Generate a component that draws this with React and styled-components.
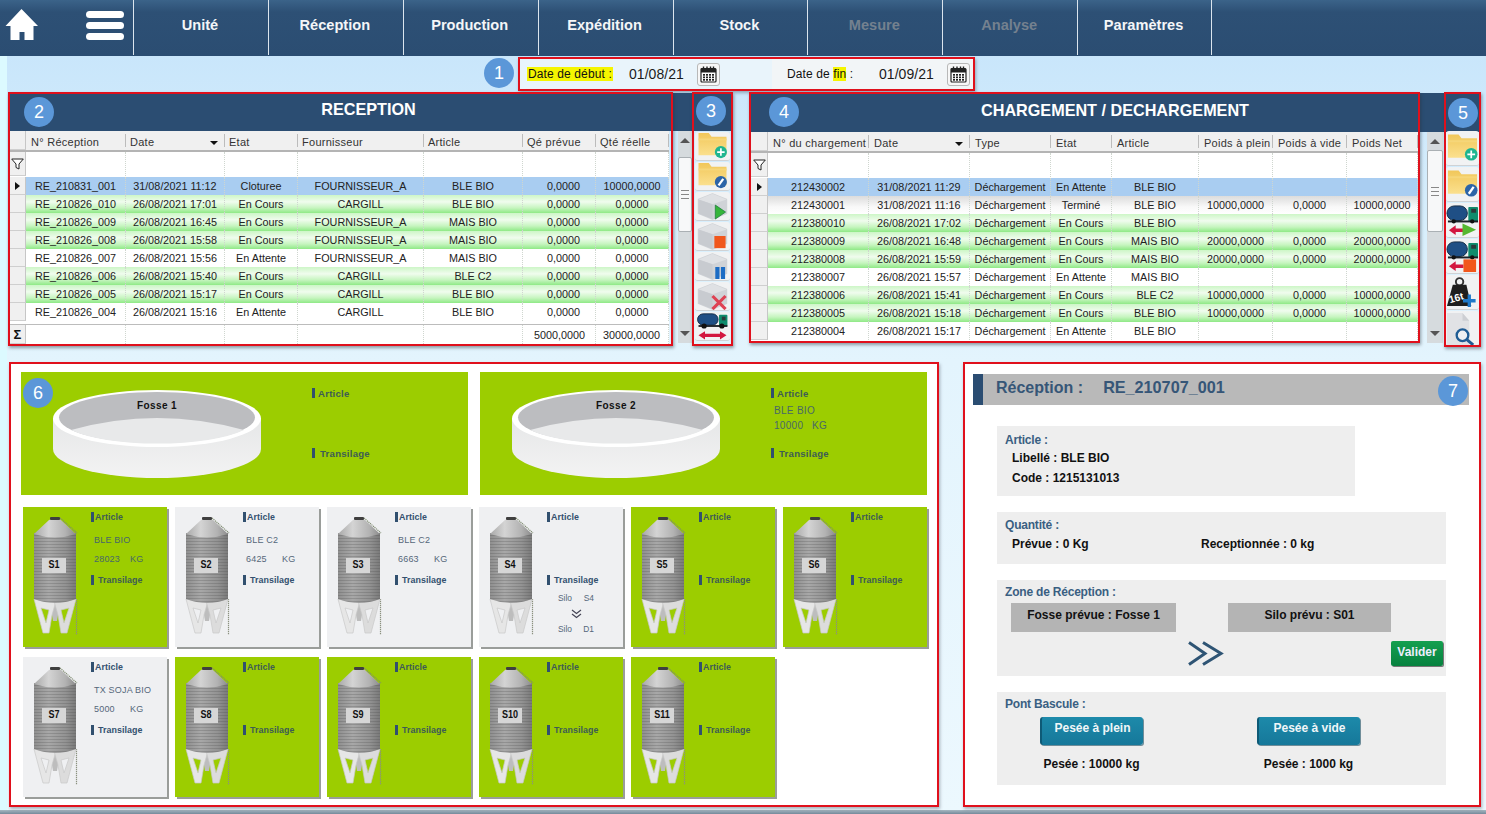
import React from "react";
import styled, { createGlobalStyle } from "styled-components";

const GlobalStyle = createGlobalStyle`
  html, body { margin: 0; padding: 0; background: #e4f4fd; }
  * { box-sizing: border-box; }
  body { font-family: "Liberation Sans", Arial, sans-serif; color: #111; }
`;

const NAVY = "#2b4d72";
const RED = "#e0101c";

const Page = styled.div`
  width: 1486px;
  height: 814px;
  overflow: hidden;
  display: flex;
  flex-direction: column;
  background:
    linear-gradient(90deg, #dcfaff 0, #dcfaff 7px, transparent 7px),
    linear-gradient(180deg, #c9e6fb 56px, #d9effc 240px, #e3f4fd 360px, #ecf8fe 814px);
`;

/* ---------- Top navigation ---------- */
const TopBar = styled.header`
  height: 56px;
  flex: none;
  display: flex;
  background: linear-gradient(180deg, #3b6389 0, #2d5075 12px, ${NAVY} 100%);
`;
const HomeZone = styled.div`
  width: 133px;
  flex: none;
  display: flex;
  align-items: flex-start;
  justify-content: space-between;
  padding: 8px 9px 0 5px;
`;
const NavItem = styled.div`
  width: 134.875px;
  flex: none;
  border-left: 1px solid #dbe5ee;
  margin-bottom: 1px;
  padding: 16px 2px 0 0;
  text-align: center;
  font-size: 14.6px;
  line-height: 18px;
  font-weight: 700;
  color: ${(p) => (p.$off ? "#74818f" : "#f4f6f8")};
  &:last-child { border-right: 1px solid #dbe5ee; }
`;
const MenuSvg = styled.svg`
  margin-top: 3px;
`;

/* ---------- Annotation overlays ---------- */
const Badge = styled.div`
  position: absolute;
  left: ${(p) => p.$x}px;
  top: ${(p) => p.$y}px;
  z-index: 5;
  width: 30px;
  height: 30px;
  border-radius: 50%;
  background: #5b97d8;
  color: #fff;
  font-size: 18px;
  line-height: 30px;
  text-align: center;
`;
const Frame = styled.div`
  position: absolute;
  left: ${(p) => p.$x}px;
  top: ${(p) => p.$y}px;
  width: ${(p) => p.$w}px;
  height: ${(p) => p.$h}px;
  z-index: 4;
  border: 2px solid ${RED};
  box-shadow: 1px 2px 3px rgba(40, 50, 60, 0.45);
  pointer-events: none;
`;

/* ---------- Date bar ---------- */
const DateRow = styled.div`
  position: relative;
  height: 37px;
  flex: none;
  padding: 1px 0 0 518px;
`;
const DateBar = styled.div`
  width: 457px;
  height: 34px;
  display: flex;
  border: 2px solid ${RED};
  box-shadow: 1px 2px 3px rgba(40, 50, 60, 0.35);
  background: #e9f4fb;
`;
const DateGroup = styled.div`
  flex: ${(p) => (p.$last ? "1" : "none")};
  width: ${(p) => (p.$last ? "auto" : "252px")};
  display: flex;
  align-items: center;
  padding-left: ${(p) => (p.$last ? "15px" : "7px")};
  background: ${(p) => (p.$last ? "#f2f5f7" : "transparent")};
`;
const DateLabel = styled.div`
  width: ${(p) => p.$w}px;
  flex: none;
  font-size: 12px;
  line-height: 15px;
  letter-spacing: 0.12px;
  white-space: nowrap;
`;
const Mark = styled.mark`
  background: #f5f500;
  color: #111;
  padding: 0 ${(p) => p.$pad || 0}px;
`;
const DateValue = styled.div`
  width: 68px;
  flex: none;
  font-size: 14px;
  letter-spacing: 0.05px;
  color: #1a1a1a;
`;
const CalButton = styled.div`
  width: 23px;
  height: 23px;
  flex: none;
  display: flex;
  align-items: center;
  justify-content: center;
  background: #f7f7f7;
  border: 1px solid #b8b8b8;
  border-radius: 3px;
`;

/* ---------- Upper grids ---------- */
const UpperRow = styled.section`
  height: 253px;
  flex: none;
  display: flex;
  padding-left: 10px;
  gap: 18px;
`;
const GridGroup = styled.div`
  position: relative;
  width: ${(p) => p.$w}px;
  flex: none;
  display: flex;
  flex-direction: column;
`;
const Strip = styled.div`
  height: ${(p) => p.$h}px;
  flex: none;
  background: ${NAVY};
  color: #fff;
  font-size: 16.2px;
  font-weight: 700;
  line-height: ${(p) => p.$lh}px;
  padding-right: ${(p) => p.$pr || 0}px;
  text-align: center;
`;
const GridBody = styled.div`
  display: flex;
  align-items: flex-start;
`;
const Table = styled.div`
  width: ${(p) => p.$w}px;
  height: ${(p) => p.$h}px;
  flex: none;
  display: flex;
  flex-direction: column;
  background: #fff;
  font-size: 10.8px;
  color: #222;
`;
const GridRow = styled.div`
  display: grid;
  grid-template-columns: ${(p) => p.$cols};
  height: ${(p) => p.$h || 18}px;
  flex: none;
  background: ${(p) =>
    p.$tone === "sel"
      ? "#a9cdf1"
      : p.$tone === "green"
      ? "linear-gradient(180deg,#cdf6c7 0,#f0fcee 38%,#c6f5bf 72%,#8fe986 100%)"
      : p.$tone === "grey"
      ? "linear-gradient(180deg,#dcdcdc 0,#f8f8f8 60%,#fff 100%)"
      : p.$tone === "head"
      ? "#f0f0f0"
      : "#fff"};
  border-bottom: ${(p) => (p.$tone === "head" ? "2px solid #b4b4b4" : "none")};
  margin-bottom: ${(p) => p.$mb || 0}px;
  margin-top: ${(p) => (p.$foot ? "auto" : "0")};
  border-top: ${(p) => (p.$foot ? "1px solid #bcbcbc" : "none")};
`;
const RowHead = styled.div`
  background: #f0f0f0;
  border-right: 1px solid #c6c6c6;
  border-bottom: 1px solid #cfcfcf;
  display: flex;
  align-items: center;
  justify-content: center;
  font-size: 13px;
  font-weight: 700;
  color: #111;
`;
const Arrow = styled.span`
  width: 0;
  height: 0;
  border-top: 4px solid transparent;
  border-bottom: 4px solid transparent;
  border-left: 5px solid #111;
`;
const HeadCell = styled.div`
  position: relative;
  display: flex;
  align-items: center;
  padding: 2px 0 0 ${(p) => p.$pad}px;
  font-size: 11px;
  letter-spacing: 0.27px;
  color: #333;
  white-space: nowrap;
  &::after {
    content: "";
    position: absolute;
    right: 0;
    top: 3px;
    bottom: 3px;
    width: 1px;
    background: #bcbcbc;
  }
`;
const SortMark = styled.span`
  position: absolute;
  right: 7px;
  top: 10px;
  width: 0;
  height: 0;
  border-left: 4px solid transparent;
  border-right: 4px solid transparent;
  border-top: 4px solid #111;
`;
const Cell = styled.div`
  display: flex;
  align-items: center;
  justify-content: ${(p) => (p.$right ? "flex-end" : "center")};
  padding-left: ${(p) => p.$pad || 0}px;
  padding-right: ${(p) => p.$right || 0}px;
  border-right: 1px dotted #cfd6cf;
  white-space: nowrap;
`;

const ScrollTrack = styled.div`
  position: relative;
  width: ${(p) => p.$w}px;
  height: ${(p) => p.$h}px;
  flex: none;
  margin-left: 9px;
  background: #d6dbde;
  display: flex;
  flex-direction: column;
  align-items: center;
  justify-content: space-between;
  padding: 7px 0;
`;
const ScrollUp = styled.span`
  width: 0;
  height: 0;
  border-left: 5px solid transparent;
  border-right: 5px solid transparent;
  border-bottom: 5px solid #555;
`;
const ScrollDown = styled.span`
  width: 0;
  height: 0;
  border-left: 5px solid transparent;
  border-right: 5px solid transparent;
  border-top: 5px solid #555;
`;
const ScrollThumb = styled.span`
  position: absolute;
  left: 0;
  right: 0;
  top: ${(p) => p.$top}px;
  height: ${(p) => p.$h}px;
  background: #f7f8f9;
  border: 1px solid #aab0b4;
  border-radius: 2px;
  display: flex;
  align-items: center;
  justify-content: center;
  &::after {
    content: "";
    width: 8px;
    height: 7px;
    border-top: 1px solid #888;
    border-bottom: 1px solid #888;
    background: linear-gradient(#888, #888) center / 100% 1px no-repeat;
  }
`;
const TileColumn = styled.div`
  width: ${(p) => p.$w}px;
  flex: none;
  margin-left: 3px;
  margin-top: ${(p) => p.$mt}px;
  display: flex;
  flex-direction: column;
  gap: 1px;
`;
const Tile = styled.div`
  height: ${(p) => p.$h}px;
  flex: none;
  background: #f1f2f3;
  border-bottom: 1px solid #cfd2d5;
  border-radius: 3px;
  display: flex;
  align-items: center;
  justify-content: center;
  overflow: hidden;
  & > svg { width: 100%; height: 100%; display: block; }
`;

/* ---------- Silo panel ---------- */
const LowerRow = styled.div`
  height: 445px;
  flex: none;
  margin-top: 16px;
  display: flex;
  padding-left: 9px;
  gap: 24px;
`;
const SiloPanel = styled.section`
  position: relative;
  width: 930px;
  flex: none;
  background: #fff;
  border: 2px solid ${RED};
  box-shadow: 1px 2px 3px rgba(40, 50, 60, 0.35);
  padding: 8px 0 0 10px;
`;
const FosseRow = styled.div`
  display: flex;
  gap: 12px;
`;
const FosseCard = styled.div`
  width: 447px;
  height: 123px;
  background: #9ccd00;
  display: flex;
  padding: 17px 0 0 31px;
`;
const FossePic = styled.div`
  position: relative;
  width: 210px;
  height: 92px;
  flex: none;
  & > svg { display: block; }
`;
const FosseName = styled.div`
  position: absolute;
  left: 0;
  right: 0;
  top: 11px;
  text-align: center;
  font-size: 10px;
  font-weight: 700;
  letter-spacing: 0.4px;
  color: #111;
`;
const FosseInfo = styled.div`
  margin: -2px 0 0 50px;
`;
const SiloGrid = styled.div`
  display: grid;
  grid-template-columns: repeat(6, 144px);
  grid-auto-rows: 140px;
  gap: 10px 8px;
  margin: 12px 0 0 2px;
`;
const SiloCard = styled.div`
  display: flex;
  background: ${(p) => (p.$on ? "#9ccd00" : "#eff0f2")};
  box-shadow: 2px 2px 0 #9a9d9a;
  padding: 8px 0 0 9px;
`;
const SiloPic = styled.div`
  position: relative;
  width: 46px;
  height: 122px;
  flex: none;
  & > svg { display: block; }
`;
const SiloTag = styled.div`
  position: absolute;
  left: 10px;
  top: 43px;
  width: 24px;
  height: 15px;
  background: #d6d6d6;
`;
const SiloTagText = styled.div`
  font-size: 11px;
  font-weight: 700;
  line-height: 13px;
  text-align: center;
  color: #111;
  transform: scaleX(0.82);
`;
const SiloInfo = styled.div`
  margin: -4px 0 0 13px;
  min-width: 0;
  flex: 1;
`;
const Caption = styled.div`
  display: flex;
  align-items: center;
  height: 12px;
  font-size: ${(p) => (p.$big ? 9.6 : 8.9)}px;
  letter-spacing: ${(p) => (p.$big ? 0.25 : 0.05)}px;
  font-weight: 700;
  color: ${(p) => (p.$on ? "#3d5c55" : "#33506f")};
  white-space: nowrap;
  &::before {
    content: "";
    width: 3px;
    height: 10px;
    background: #31506f;
    margin-right: ${(p) => p.$gap}px;
    flex: none;
  }
`;
const DataBlock = styled.div`
  height: ${(p) => p.$h}px;
  padding: ${(p) => p.$pt}px 0 0 3px;
`;
const DataLine = styled.div`
  display: flex;
  height: ${(p) => p.$h}px;
  align-items: center;
  font-size: ${(p) => (p.$big ? 10 : 9)}px;
  letter-spacing: ${(p) => (p.$big ? 0.3 : 0.2)}px;
  color: ${(p) => (p.$on ? "#48686a" : "#55677a")};
  white-space: nowrap;
`;
const DataValue = styled.span`
  width: ${(p) => (p.$big ? 38 : 36)}px;
  flex: none;
`;
const TransferBlock = styled.div`
  margin: 6px 0 0 11px;
  width: 36px;
  display: flex;
  flex-direction: column;
  align-items: center;
  font-size: 8.4px;
  color: #55677a;
  white-space: nowrap;
`;
const TransferLine = styled.div`
  display: flex;
  justify-content: space-between;
  width: 100%;
  height: 12px;
  line-height: 12px;
`;
const ChevronSlot = styled.div`
  height: 10px;
  margin: 5px 0 4px;
  & > svg { display: block; }
`;

/* ---------- Reception detail ---------- */
const DetailPanel = styled.section`
  position: relative;
  width: 518px;
  flex: none;
  background: #fff;
  border: 2px solid ${RED};
  box-shadow: 1px 2px 3px rgba(40, 50, 60, 0.35);
  padding: 10px 10px 0 8px;
`;
const DetailTitle = styled.h2`
  margin: 0;
  height: 31px;
  display: flex;
  gap: 20px;
  background: #b9b9b9;
  border-left: 10px solid ${NAVY};
  padding-left: 13px;
  font-size: 16px;
  line-height: 27px;
  font-weight: 700;
  color: #365677;
`;
const TitleCode = styled.span`
  font-size: 16.2px;
`;
const Sections = styled.div`
  padding: 21px 20px 0 24px;
  display: flex;
  flex-direction: column;
  gap: 16px;
`;
const Block = styled.div`
  width: ${(p) => p.$w || 449}px;
  height: ${(p) => p.$h}px;
  flex: none;
  background: #eeeeee;
  padding: ${(p) => p.$pt}px 0 0 8px;
`;
const BlockLabel = styled.div`
  font-size: 12px;
  line-height: 14px;
  color: #3a5f82;
  font-weight: 700;
  letter-spacing: -0.2px;
`;
const InfoList = styled.div`
  margin-top: 1px;
`;
const InfoLine = styled.div`
  font-size: 12px;
  line-height: 20px;
  font-weight: 700;
  padding-left: 7px;
  color: #111;
`;
const QtyRow = styled.div`
  display: grid;
  grid-template-columns: 189px 1fr;
  padding-left: 7px;
  margin-top: 2px;
  font-size: 12px;
  line-height: 20px;
  font-weight: 700;
  color: #111;
`;
const ZoneRow = styled.div`
  display: flex;
  gap: 52px;
  margin: 4px 0 0 6px;
`;
const ZoneTag = styled.div`
  width: ${(p) => p.$w}px;
  height: 29px;
  background: #b4b4b4;
  font-size: 12px;
  line-height: 25px;
  font-weight: 700;
  text-align: center;
  color: #111;
`;
const ZoneActions = styled.div`
  display: flex;
  align-items: flex-start;
  margin: 9px 0 0 183px;
`;
const ValidButton = styled.div`
  width: 52px;
  height: 25px;
  margin-left: 167px;
  border-radius: 2px;
  background: linear-gradient(180deg, #14a050, #07813f);
  box-shadow: 1px 1px 0 #777;
  color: #eef;
  font-size: 12px;
  line-height: 22px;
  font-weight: 700;
  text-align: center;
`;
const WeighGrid = styled.div`
  display: grid;
  grid-template-columns: 103px 103px;
  column-gap: 114px;
  margin: 6px 0 0 35px;
  justify-items: center;
`;
const WeighButton = styled.div`
  width: 103px;
  height: 28px;
  border-radius: 3px;
  border-left: 2px solid #0e5a76;
  background: linear-gradient(180deg, #1d8aaa, #16789a);
  box-shadow: 1px 1px 0 #6f8d99;
  color: #f0f6f8;
  font-size: 12px;
  line-height: 23px;
  font-weight: 700;
  text-align: center;
`;
const WeighValue = styled.div`
  margin-top: 12px;
  font-size: 12px;
  line-height: 14px;
  font-weight: 700;
  white-space: nowrap;
  color: #111;
`;
const BottomEdge = styled.div`
  height: 4px;
  flex: none;
  margin-top: 3px;
  background: linear-gradient(180deg, #a8b8c2, #74899a);
`;

/* ---------- Drawings ---------- */
const HomeIcon = () => (
  <svg width="33" height="33" viewBox="0 0 33 33">
    <path fill="#fff" d="M16.5 1 0.5 18h5V32h9V24h5v8h9V18h4.5z" />
  </svg>
);
const MenuIcon = () => (
  <MenuSvg width="38" height="32" viewBox="0 0 38 32">
    <rect x="0" y="0" width="38" height="7" rx="3.5" fill="#fff" />
    <rect x="0" y="11" width="38" height="7" rx="3.5" fill="#fff" />
    <rect x="0" y="22" width="38" height="7" rx="3.5" fill="#fff" />
  </MenuSvg>
);
const CalendarIcon = () => (
  <svg width="17" height="17" viewBox="0 0 17 17">
    <rect x="1" y="2.5" width="15" height="13.5" rx="1" fill="#fff" stroke="#222" strokeWidth="1.2" />
    <rect x="1" y="2.5" width="15" height="4" fill="#222" />
    {[3.5, 7, 10.5, 13.5].map((x) => (
      <rect key={x} x={x - 0.7} y="0.5" width="1.4" height="3.5" fill="#222" />
    ))}
    {[8, 10.5, 13].map((y) =>
      [3, 6, 9, 12].map((x) => <rect key={`${x}-${y}`} x={x} y={y} width="2" height="1.7" fill="#222" />)
    )}
  </svg>
);
const FunnelIcon = () => (
  <svg width="13" height="12" viewBox="0 0 13 12">
    <path d="M0.7 1h11.6L8 6v5L5 9.5V6z" fill="#fff" stroke="#222" strokeWidth="1" />
  </svg>
);
const Folder = ({ children }) => (
  <svg viewBox="0 0 34 30">
    <defs>
      <linearGradient id="fold" x1="0" y1="0" x2="0" y2="1">
        <stop offset="0" stopColor="#f1c75a" />
        <stop offset="1" stopColor="#fbe08e" />
      </linearGradient>
    </defs>
    <path d="M2 1h11l3 4h16v20H2z" fill="url(#fold)" />
    <path d="M2 7h30v2H2z" fill="#f6d679" />
    {children}
  </svg>
);
const PlusDot = () => (
  <g>
    <circle cx="26" cy="21.5" r="6.5" fill="#1fb590" />
    <path d="M26 17.5v8M22 21.5h8" stroke="#fff" strokeWidth="1.8" />
  </g>
);
const PenDot = () => (
  <g>
    <circle cx="26" cy="21.5" r="6.5" fill="#2c64a8" />
    <path d="M23.5 25l5-7" stroke="#fff" strokeWidth="2.4" />
  </g>
);
const Cube = ({ children }) => (
  <svg viewBox="0 0 34 30">
    <path d="M17 2 32 8v15l-15 6-15-6V8z" fill="#d0d3d7" stroke="#d0d3d7" strokeWidth="1.5" strokeLinejoin="round" />
    <path d="M17 2 32 8 17 13 2 8z" fill="#dfe1e4" />
    <path d="M2 8l15 5v16L2 23z" fill="#c8cbd0" />
    {children}
  </svg>
);
const TruckBody = ({ w = 22, h = 12, y = 2, r = 2.8 }) => (
  <g>
    <rect x="1" y={y} width={w} height={h} rx={h / 2} fill="#1f4f85" stroke="#152c45" strokeWidth="1" />
    <rect x={w + 2} y={y + 1} width={31 - w} height={h} rx="1" fill="#0f8c6d" />
    <rect x={w + 5} y={y + 3} width={26 - w} height={4} fill="#2a3a3a" />
    <rect x="2" y={y + h} width="31" height="2" fill="#1c2228" />
    <circle cx="8" cy={y + h + 1} r={r} fill="#111" />
    <circle cx="27" cy={y + h + 1} r={r} fill="#111" />
  </g>
);
const WeightIcon = () => (
  <svg viewBox="0 0 34 35">
    <circle cx="14" cy="7" r="3.8" fill="none" stroke="#333" strokeWidth="2" />
    <path d="M7 10h14l5 22H1z" fill="#1e1e1e" />
    <text x="3" y="27" fill="#fff" fontSize="10.5" fontWeight="700" transform="rotate(-16 11 24)" fontFamily="Liberation Sans">
      16t
    </text>
    <path d="M24 20v13M17.5 26.5h13" stroke="#1f78c8" strokeWidth="3.4" />
  </svg>
);
const DocSearchIcon = () => (
  <svg viewBox="0 0 34 35">
    <path d="M1 2h16l7 8v25H1z" fill="#e1e2e5" />
    <path d="M17 2l7 8h-7z" fill="#cdcfd3" />
    <circle cx="17" cy="25" r="6" fill="#eef0f2" stroke="#1f5c94" strokeWidth="2.4" />
    <path d="M21.5 29.5 28 35" stroke="#1f5c94" strokeWidth="3" />
  </svg>
);
const Chevrons = () => (
  <svg width="36" height="25" viewBox="0 0 36 25">
    <path d="M1 1.5 17 12.5 1 23.5M15 1.5 33 12.5 15 23.5" fill="none" stroke="#2e5474" strokeWidth="3" />
  </svg>
);
const SmallChevrons = () => (
  <svg width="11" height="10" viewBox="0 0 11 10">
    <path d="M1 1l4.5 3.5L10 1M1 5l4.5 3.5L10 5" fill="none" stroke="#445" strokeWidth="1.2" />
  </svg>
);

const SiloArt = () => (
  <svg width="46" height="122" viewBox="0 0 46 122">
    <defs>
      <linearGradient id="siloBody" x1="0" x2="1" y1="0" y2="0">
        <stop offset="0" stopColor="#8f8f8f" />
        <stop offset=".35" stopColor="#a8a8a8" />
        <stop offset=".75" stopColor="#939393" />
        <stop offset="1" stopColor="#7a7a7a" />
      </linearGradient>
      <linearGradient id="siloCone" x1="0" x2="1" y1="0" y2="0">
        <stop offset="0" stopColor="#a8a8a8" />
        <stop offset=".35" stopColor="#d4d4d4" />
        <stop offset=".75" stopColor="#b2b2b2" />
        <stop offset="1" stopColor="#8c8c8c" />
      </linearGradient>
      <pattern id="siloRibs" width="4" height="3" patternUnits="userSpaceOnUse">
        <rect y="2" width="4" height="1" fill="rgba(70,70,70,.24)" />
      </pattern>
    </defs>
    <path d="M28 3 45 18" stroke="#7f8a70" strokeWidth="1.2" strokeDasharray="1.2 .8" />
    <path d="M44.5 84V120" stroke="#8b917f" strokeWidth="1.2" strokeDasharray="1.2 .8" />
    <path d="M18 88h10l-3 18h-4z" fill="#bdbdbd" />
    <path
      fillRule="evenodd"
      fill="#e6e6e6"
      stroke="#c9c9c9"
      strokeWidth=".7"
      d="M2 84L11 118L17 118L20 100L24 86ZM9 93L14 108L17 95Z"
    />
    <path
      fillRule="evenodd"
      fill="#dcdcdc"
      stroke="#c9c9c9"
      strokeWidth=".7"
      d="M44 84L35 118L29 118L26 100L22 86ZM37 93L32 108L29 95Z"
    />
    <path d="M2 18V84Q23 92 44 84V18Z" fill="url(#siloBody)" />
    <path d="M2 18V84Q23 92 44 84V18Z" fill="url(#siloRibs)" />
    <path d="M2 19 17 5Q23 2 29 5L44 19Q23 26 2 19Z" fill="url(#siloCone)" />
    <rect x="18" y="2" width="10" height="3" rx="1" fill="#3f3f3f" />
  </svg>
);

const FosseArt = () => (
  <svg width="210" height="92" viewBox="0 0 210 92">
    <defs>
      <linearGradient id="fosseWall" x1="0" x2="0" y1="0" y2="1">
        <stop offset="0" stopColor="#e6e7e8" />
        <stop offset="1" stopColor="#f3f3f3" />
      </linearGradient>
    </defs>
    <path d="M1 30V60A104 29 0 0 0 209 60V30Z" fill="url(#fosseWall)" />
    <ellipse cx="105" cy="29.5" rx="104" ry="28.5" fill="#fff" />
    <ellipse cx="105" cy="28.5" rx="98" ry="25.5" fill="#bcbdc0" />
    <path d="M19 41Q105 17 192 41A98 25.5 0 0 1 19 41Z" fill="#e8e9ea" />
  </svg>
);

/* ---------- Data ---------- */
const recCols = "16px 100px 99px 73px 126px 99px 73px 73px";
const chgCols = "17px 101px 101px 81px 61px 87px 74px 74px 71px";

const recHead = ["N° Réception", "Date", "Etat", "Fournisseur", "Article", "Qé prévue", "Qté réelle"];
const chgHead = ["N° du chargement", "Date", "Type", "Etat", "Article", "Poids à plein", "Poids à vide", "Poids Net"];

const recRows = [
  ["sel", "RE_210831_001", "31/08/2021 11:12", "Cloturee", "FOURNISSEUR_A", "BLE BIO", "0,0000", "10000,0000"],
  ["green", "RE_210826_010", "26/08/2021 17:01", "En Cours", "CARGILL", "BLE BIO", "0,0000", "0,0000"],
  ["green", "RE_210826_009", "26/08/2021 16:45", "En Cours", "FOURNISSEUR_A", "MAIS BIO", "0,0000", "0,0000"],
  ["green", "RE_210826_008", "26/08/2021 15:58", "En Cours", "FOURNISSEUR_A", "MAIS BIO", "0,0000", "0,0000"],
  ["white", "RE_210826_007", "26/08/2021 15:56", "En Attente", "FOURNISSEUR_A", "MAIS BIO", "0,0000", "0,0000"],
  ["green", "RE_210826_006", "26/08/2021 15:40", "En Cours", "CARGILL", "BLE C2", "0,0000", "0,0000"],
  ["green", "RE_210826_005", "26/08/2021 15:17", "En Cours", "CARGILL", "BLE BIO", "0,0000", "0,0000"],
  ["white", "RE_210826_004", "26/08/2021 15:16", "En Attente", "CARGILL", "BLE BIO", "0,0000", "0,0000"],
];
const D = "Déchargement";
const chgRows = [
  ["sel", "212430002", "31/08/2021 11:29", D, "En Attente", "BLE BIO", "", "", ""],
  ["grey", "212430001", "31/08/2021 11:16", D, "Terminé", "BLE BIO", "10000,0000", "0,0000", "10000,0000"],
  ["green", "212380010", "26/08/2021 17:02", D, "En Cours", "BLE BIO", "", "", ""],
  ["green", "212380009", "26/08/2021 16:48", D, "En Cours", "MAIS BIO", "20000,0000", "0,0000", "20000,0000"],
  ["green", "212380008", "26/08/2021 15:59", D, "En Cours", "MAIS BIO", "20000,0000", "0,0000", "20000,0000"],
  ["white", "212380007", "26/08/2021 15:57", D, "En Attente", "MAIS BIO", "", "", ""],
  ["green", "212380006", "26/08/2021 15:41", D, "En Cours", "BLE C2", "10000,0000", "0,0000", "10000,0000"],
  ["green", "212380005", "26/08/2021 15:18", D, "En Cours", "BLE BIO", "10000,0000", "0,0000", "10000,0000"],
  ["white", "212380004", "26/08/2021 15:17", D, "En Attente", "BLE BIO", "", "", ""],
];

const silos = [
  { id: "S1", on: true, art: "BLE BIO", kg: "28023" },
  { id: "S2", art: "BLE C2", kg: "6425" },
  { id: "S3", art: "BLE C2", kg: "6663" },
  { id: "S4", transfer: ["S4", "D1"] },
  { id: "S5", on: true },
  { id: "S6", on: true },
  { id: "S7", art: "TX SOJA BIO", kg: "5000" },
  { id: "S8", on: true },
  { id: "S9", on: true },
  { id: "S10", on: true },
  { id: "S11", on: true },
];

const navItems = [
  ["Unité"], ["Réception"], ["Production"], ["Expédition"], ["Stock"],
  ["Mesure", true], ["Analyse", true], ["Paramètres"],
];

/* ---------- Composite parts ---------- */
const DataGrid = ({ w, h, cols, head, rows, sortAt, headPad, pads = {}, footer }) => (
  <Table $w={w} $h={h}>
    <GridRow $cols={cols} $h={21} $tone="head">
      <RowHead />
      {head.map((t, i) => (
        <HeadCell key={t} $pad={i === 0 ? 5 : headPad}>
          {t}
          {i === sortAt && <SortMark />}
        </HeadCell>
      ))}
    </GridRow>
    <GridRow $cols={cols} $h={24} $mb={1}>
      <RowHead>
        <FunnelIcon />
      </RowHead>
      {head.map((t) => (
        <Cell key={t} />
      ))}
    </GridRow>
    {rows.map(([tone, ...cells], r) => (
      <GridRow key={cells[0]} $cols={cols} $tone={tone}>
        <RowHead>{r === 0 && <Arrow />}</RowHead>
        {cells.map((c, i) => (
          <Cell key={i} $pad={pads[i]}>
            {c}
          </Cell>
        ))}
      </GridRow>
    ))}
    {footer && (
      <GridRow $cols={cols} $h={20} $foot>
        <RowHead>Σ</RowHead>
        {footer.map(([c, right], i) => (
          <Cell key={i} $right={right}>
            {c}
          </Cell>
        ))}
      </GridRow>
    )}
  </Table>
);

const Scroll = ({ w, h, top, thumb }) => (
  <ScrollTrack $w={w} $h={h}>
    <ScrollUp />
    <ScrollThumb $top={top} $h={thumb} />
    <ScrollDown />
  </ScrollTrack>
);

const Silo = ({ s }) => (
  <SiloCard $on={s.on}>
    <SiloPic>
      <SiloArt />
      <SiloTag><SiloTagText>{s.id}</SiloTagText></SiloTag>
    </SiloPic>
    <SiloInfo>
      <Caption $on={s.on} $gap={1}>Article</Caption>
      <DataBlock $h={51} $pt={7}>
        {s.art && <DataLine $h={19} $on={s.on}>{s.art}</DataLine>}
        {s.kg && (
          <DataLine $h={19} $on={s.on}>
            <DataValue>{s.kg}</DataValue>KG
          </DataLine>
        )}
      </DataBlock>
      <Caption $on={s.on} $gap={4}>Transilage</Caption>
      {s.transfer && (
        <TransferBlock>
          <TransferLine><span>Silo</span><span>{s.transfer[0]}</span></TransferLine>
          <ChevronSlot><SmallChevrons /></ChevronSlot>
          <TransferLine><span>Silo</span><span>{s.transfer[1]}</span></TransferLine>
        </TransferBlock>
      )}
    </SiloInfo>
  </SiloCard>
);

const Fosse = ({ name, art, kg }) => (
  <FosseCard>
    <FossePic>
      <FosseArt />
      <FosseName>{name}</FosseName>
    </FossePic>
    <FosseInfo>
      <Caption $on $big $gap={3}>Article</Caption>
      <DataBlock $h={48} $pt={4}>
        {art && <DataLine $h={15} $on $big>{art}</DataLine>}
        {kg && (
          <DataLine $h={15} $on $big>
            <DataValue $big>{kg}</DataValue>KG
          </DataLine>
        )}
      </DataBlock>
      <Caption $on $big $gap={5}>Transilage</Caption>
    </FosseInfo>
  </FosseCard>
);

export default function App() {
  return (
    <Page>
      <GlobalStyle />
      <TopBar>
        <HomeZone>
          <HomeIcon />
          <MenuIcon />
        </HomeZone>
        {navItems.map(([label, off]) => (
          <NavItem key={label} $off={off}>
            {label}
          </NavItem>
        ))}
      </TopBar>

      <DateRow>
        <Badge $x={484} $y={2}>1</Badge>
        <DateBar>
          <DateGroup>
            <DateLabel $w={102}>
              <Mark $pad={1}>Date de début :</Mark>
            </DateLabel>
            <DateValue>01/08/21</DateValue>
            <CalButton>
              <CalendarIcon />
            </CalButton>
          </DateGroup>
          <DateGroup $last>
            <DateLabel $w={92}>
              Date de <Mark>fin</Mark> :
            </DateLabel>
            <DateValue>01/09/21</DateValue>
            <CalButton>
              <CalendarIcon />
            </CalButton>
          </DateGroup>
        </DateBar>
      </DateRow>

      <UpperRow>
        <GridGroup $w={723}>
          <Strip $h={38} $lh={33} $pr={6}>RECEPTION</Strip>
          <Badge $x={14} $y={4}>2</Badge>
          <Badge $x={686} $y={3}>3</Badge>
          <Frame $x={-2} $y={-1} $w={665} $h={254} />
          <Frame $x={682} $y={-1} $w={41} $h={254} />
          <GridBody>
            <DataGrid
              w={659}
              h={213}
              cols={recCols}
              head={recHead}
              rows={recRows}
              sortAt={1}
              headPad={4}
              pads={{ 5: 9 }}
              footer={[[""], [""], [""], [""], [""], ["5000,0000", 10], ["30000,0000", 8]]}
            />
            <Scroll w={14} h={212} top={26} thumb={75} />
            <TileColumn $w={35} $mt={1}>
              <Tile $h={29}><Folder><PlusDot /></Folder></Tile>
              <Tile $h={29}><Folder><PenDot /></Folder></Tile>
              <Tile $h={29}>
                <Cube><path d="M20 14v15l11-7.5z" fill="#35b53a" stroke="#1d7a3d" strokeWidth=".8" /></Cube>
              </Tile>
              <Tile $h={29}>
                <Cube><rect x="19" y="15" width="12" height="13" fill="#f1571c" /></Cube>
              </Tile>
              <Tile $h={29}>
                <Cube><path d="M20 16h4.5v13H20zM26 16h4.5v13H26z" fill="#1c6cc4" /></Cube>
              </Tile>
              <Tile $h={29}>
                <Cube><path d="M17 15 31 29M31 15 17 29" stroke="#de4253" strokeWidth="3.4" /></Cube>
              </Tile>
              <Tile $h={29}>
                <svg viewBox="0 0 34 30">
                  <TruckBody />
                  <path d="M8 25H26" stroke="#d3173f" strokeWidth="3.6" />
                  <path d="M2 25 9 20.5v9zM32 25 25 20.5v9z" fill="#d3173f" />
                </svg>
              </Tile>
            </TileColumn>
          </GridBody>
        </GridGroup>

        <GridGroup $w={728}>
          <Strip $h={39} $lh={34}>CHARGEMENT / DECHARGEMENT</Strip>
          <Badge $x={18} $y={4}>4</Badge>
          <Badge $x={697} $y={5}>5</Badge>
          <Frame $x={-2} $y={-1} $w={671} $h={251} />
          <Frame $x={693} $y={-1} $w={37} $h={255} />
          <GridBody>
            <DataGrid
              w={667}
              h={210}
              cols={chgCols}
              head={chgHead}
              rows={chgRows}
              sortAt={1}
              headPad={5}
            />
            <Scroll w={16} h={211} top={18} thumb={82} />
            <TileColumn $w={33} $mt={-1}>
              <Tile $h={35}><Folder><PlusDot /></Folder></Tile>
              <Tile $h={35}><Folder><PenDot /></Folder></Tile>
              <Tile $h={35}>
                <svg viewBox="0 0 34 35">
                  <TruckBody w={21} h={15} y={3} r={2.2} />
                  <path d="M9 28H18" stroke="#d3173f" strokeWidth="3.6" />
                  <path d="M3 28 10 23v10z" fill="#d3173f" />
                  <path d="M17 21v13l14-6.5z" fill="#54b830" />
                </svg>
              </Tile>
              <Tile $h={35}>
                <svg viewBox="0 0 34 35">
                  <TruckBody w={21} h={15} y={3} r={2.2} />
                  <path d="M9 28H18" stroke="#d3173f" strokeWidth="3.6" />
                  <path d="M3 28 10 23v10z" fill="#d3173f" />
                  <rect x="18" y="21" width="13" height="13" fill="#f1571c" />
                </svg>
              </Tile>
              <Tile $h={35}><WeightIcon /></Tile>
              <Tile $h={35}><DocSearchIcon /></Tile>
            </TileColumn>
          </GridBody>
        </GridGroup>
      </UpperRow>

      <LowerRow>
        <SiloPanel>
          <Badge $x={12} $y={14}>6</Badge>
          <FosseRow>
            <Fosse name="Fosse 1" />
            <Fosse name="Fosse 2" art="BLE BIO" kg="10000" />
          </FosseRow>
          <SiloGrid>
            {silos.map((s) => (
              <Silo key={s.id} s={s} />
            ))}
          </SiloGrid>
        </SiloPanel>

        <DetailPanel>
          <Badge $x={473} $y={12}>7</Badge>
          <DetailTitle>
            <span>Réception :</span>
            <TitleCode>RE_210707_001</TitleCode>
          </DetailTitle>
          <Sections>
            <Block $w={358} $h={70} $pt={7}>
              <BlockLabel>Article :</BlockLabel>
              <InfoList>
                <InfoLine>Libellé : BLE BIO</InfoLine>
                <InfoLine>Code : 1215131013</InfoLine>
              </InfoList>
            </Block>
            <Block $h={52} $pt={6}>
              <BlockLabel>Quantité :</BlockLabel>
              <QtyRow>
                <span>Prévue : 0 Kg</span>
                <span>Receptionnée : 0 kg</span>
              </QtyRow>
            </Block>
            <Block $h={96} $pt={5}>
              <BlockLabel>Zone de Réception :</BlockLabel>
              <ZoneRow>
                <ZoneTag $w={165}>Fosse prévue : Fosse 1</ZoneTag>
                <ZoneTag $w={163}>Silo prévu : S01</ZoneTag>
              </ZoneRow>
              <ZoneActions>
                <Chevrons />
                <ValidButton>Valider</ValidButton>
              </ZoneActions>
            </Block>
            <Block $h={93} $pt={5}>
              <BlockLabel>Pont Bascule :</BlockLabel>
              <WeighGrid>
                <WeighButton>Pesée à plein</WeighButton>
                <WeighButton>Pesée à vide</WeighButton>
                <WeighValue>Pesée : 10000 kg</WeighValue>
                <WeighValue>Pesée : 1000 kg</WeighValue>
              </WeighGrid>
            </Block>
          </Sections>
        </DetailPanel>
      </LowerRow>
      <BottomEdge />
    </Page>
  );
}
